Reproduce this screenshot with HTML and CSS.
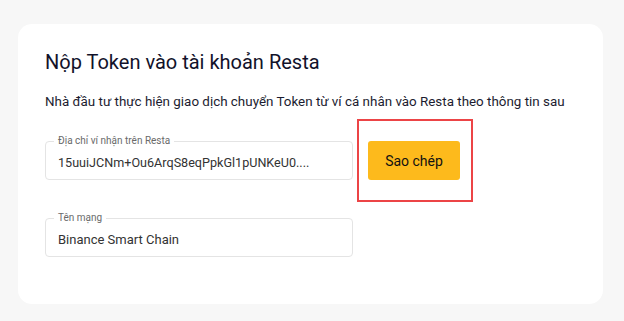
FILE: index.html
```html
<!DOCTYPE html>
<html lang="vi">
<head>
<meta charset="utf-8">
<link rel="stylesheet" href="styles.css">
</head>
<body>
<div class="page">
  <section class="card">
    <h1 class="title">Nộp Token vào tài khoản Resta</h1>
    <p class="subtitle">Nhà đầu tư thực hiện giao dịch chuyển Token từ ví cá nhân vào Resta theo thông tin sau</p>
    <div class="row">
      <div class="field">
        <span class="field-label">Địa chỉ ví nhận trên Resta</span>
        <span class="field-value addr">15uuiJCNm+Ou6ArqS8eqPpkGl1pUNKeU0....</span>
      </div>
      <div class="highlight">
        <button class="copy-btn">Sao chép</button>
      </div>
    </div>
    <div class="row row-second">
      <div class="field">
        <span class="field-label">Tên mạng</span>
        <span class="field-value">Binance Smart Chain</span>
      </div>
    </div>
  </section>
</div>
</body>
</html>
```
FILE: styles.css
```css
* { box-sizing: border-box; }
html, body {
  margin: 0;
  padding: 0;
  background: #f7f7f7;
  font-family: Roboto, "Noto Sans", "Liberation Sans", sans-serif;
}
.page {
  width: 624px;
  height: 321px;
  padding: 24px 21px 0 18px;
}
.card {
  background: #ffffff;
  border-radius: 14px;
  height: 280px;
  padding: 26px 27px 0 27px;
}
.title {
  margin: 0;
  font-size: 20px;
  line-height: 24px;
  font-weight: 400;
  color: #12122a;
}
.subtitle {
  margin: 18px 0 0 0;
  font-size: 13.4px;
  line-height: 20px;
  color: #1c1c30;
  white-space: nowrap;
}
.row {
  display: flex;
  align-items: center;
  gap: 4px;
  margin-top: 29px;
}
.row-second {
  margin-top: 38px;
}
.field {
  position: relative;
  width: 308px;
  height: 39px;
  border: 1px solid #e4e4e4;
  border-radius: 4px;
  display: flex;
  align-items: center;
  padding: 3px 12px 0 12px;
}
.field-label {
  position: absolute;
  top: -7px;
  left: 8px;
  padding: 0 4px;
  background: #ffffff;
  font-size: 10px;
  line-height: 12px;
  color: #6a6a6a;
}
.field-value {
  font-size: 13px;
  color: #333333;
  white-space: nowrap;
}
.field-value.addr {
  font-size: 12.6px;
}
.highlight {
  border: 2px solid #ec4446;
  padding: 20px 11px 20px 9px;
  margin: -22px 0;
}
.copy-btn {
  display: block;
  width: 92px;
  height: 39px;
  border: none;
  border-radius: 3px;
  background: #fdba1c;
  font-family: inherit;
  font-size: 14px;
  font-weight: 400;
  color: #111111;
  padding: 0;
}
```
